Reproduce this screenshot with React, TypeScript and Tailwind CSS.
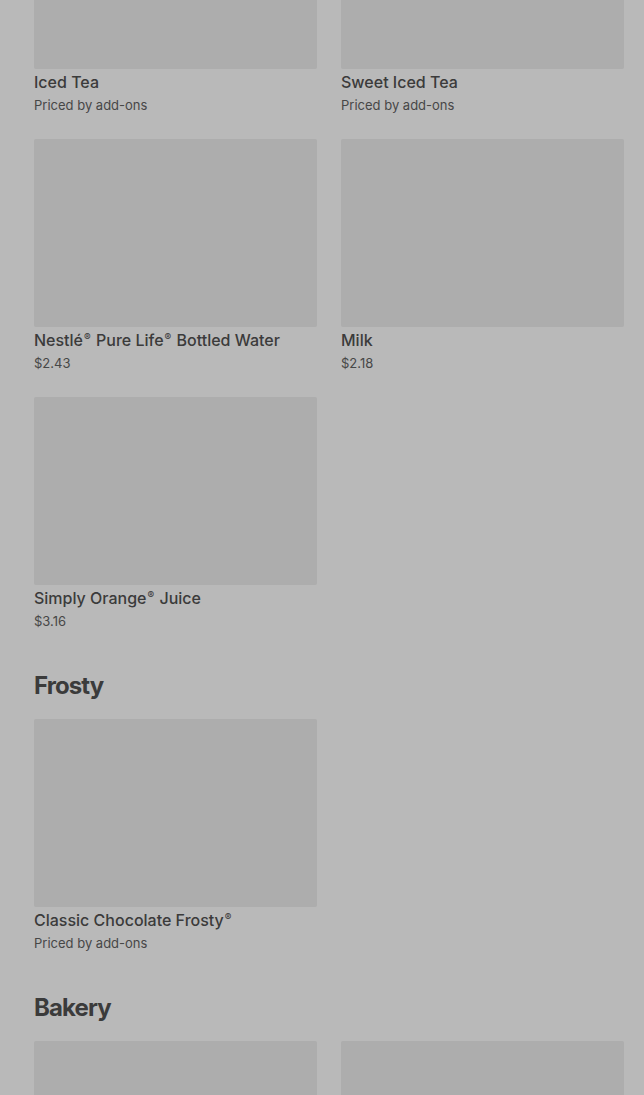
import React from 'react';

type Item = { name: string; price: string };

const drinks: Item[] = [
  { name: 'Iced Tea', price: 'Priced by add-ons' },
  { name: 'Sweet Iced Tea', price: 'Priced by add-ons' },
  { name: 'Nestlé® Pure Life® Bottled Water', price: '$2.43' },
  { name: 'Milk', price: '$2.18' },
  { name: 'Simply Orange® Juice', price: '$3.16' },
];

const frosty: Item[] = [{ name: 'Classic Chocolate Frosty®', price: 'Priced by add-ons' }];

const bakery: Item[] = [
  { name: 'Chocolate Chunk Cookie', price: '$1.99' },
  { name: 'Sugar Cookie', price: '$1.99' },
];

// render ® as a small raised mark, as on the menu
function Name({ text }: { text: string }) {
  const parts = text.split('®');
  return (
    <>
      {parts.map((p, i) => (
        <React.Fragment key={i}>
          {p}
          {i < parts.length - 1 && (
            <span className="relative -top-[5px] mx-[1px] text-[10px] leading-none align-baseline">
              ®
            </span>
          )}
        </React.Fragment>
      ))}
    </>
  );
}

function Card({ item }: { item: Item }) {
  return (
    <div className="flex flex-col">
      <div className="h-[188px] bg-[#adadad] rounded-[2px]" />
      <div className="mt-[3px] h-5 text-[16px] leading-5 font-medium text-[#3b3b3b]">
        <Name text={item.name} />
      </div>
      <div className="mt-[3px] h-5 text-[13px] leading-5 text-[#474747]">{item.price}</div>
    </div>
  );
}

function Section({ title, items }: { title?: string; items: Item[] }) {
  return (
    <section className="flex flex-col">
      {title && (
        <h2 className="text-[24px] leading-8 font-bold tracking-[-0.9px] text-[#3b3b3b] mb-[17px]">
          {title}
        </h2>
      )}
      <div className="grid grid-cols-2 gap-6">
        {items.map((item) => (
          <Card key={item.name} item={item} />
        ))}
      </div>
    </section>
  );
}

export default function App() {
  return (
    <div
      className="h-[1095px] overflow-hidden bg-[#b9b9b9]"
      style={{ fontFamily: 'Inter, "Noto Sans", sans-serif' }}
    >
      {/* page scrolled: first row's images are cut at the top */}
      <div className="-mt-[119px] pl-[34px] pr-[20px] flex flex-col gap-[39px]">
        <Section items={drinks} />
        <Section title="Frosty" items={frosty} />
        <Section title="Bakery" items={bakery} />
      </div>
    </div>
  );
}
